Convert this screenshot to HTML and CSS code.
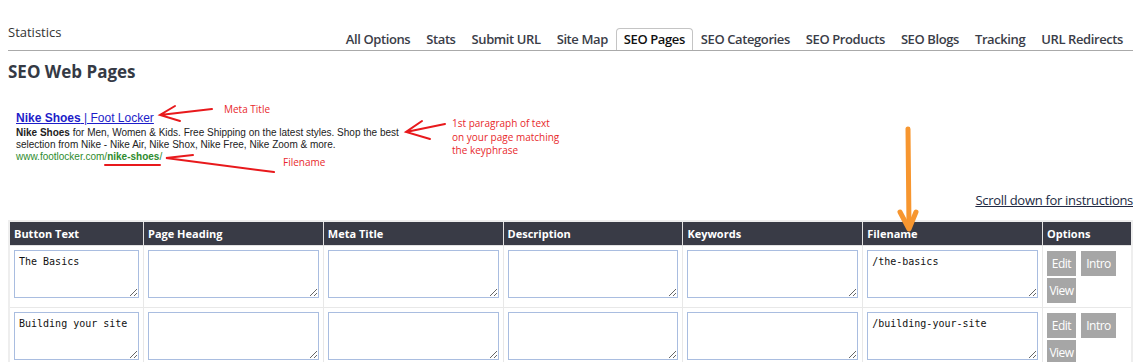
FILE: index.html
```html
<!DOCTYPE html>
<html lang="en">
<head>
    <meta charset="UTF-8">
    <meta name="viewport" content="width=device-width, initial-scale=1.0">
    <title>SEO Web Pages</title>
    <link rel="stylesheet" href="styles.css">
</head>
<body>
    <div class="page">
        <div class="topbar">
            <div class="section-title">Statistics</div>
            <ul class="tabs">
                <li><a href="#">All Options</a></li>
                <li><a href="#">Stats</a></li>
                <li><a href="#">Submit URL</a></li>
                <li><a href="#">Site Map</a></li>
                <li class="active"><a href="#">SEO Pages</a></li>
                <li><a href="#">SEO Categories</a></li>
                <li><a href="#">SEO Products</a></li>
                <li><a href="#">SEO Blogs</a></li>
                <li><a href="#">Tracking</a></li>
                <li><a href="#">URL Redirects</a></li>
            </ul>
        </div>

        <h1>SEO Web Pages</h1>

        <div class="example">
            <div class="snippet">
                <a class="snippet-title" href="#"><b>Nike Shoes</b> | Foot Locker</a>
                <p class="snippet-text"><b>Nike Shoes</b> for Men, Women &amp; Kids. Free Shipping on the latest styles. Shop the best<br>selection from Nike - Nike Air, Nike Shox, Nike Free, Nike Zoom &amp; more.</p>
                <div class="snippet-url">www.footlocker.com/<b>nike-shoes</b>/</div>
            </div>
            <div class="note note-title">Meta Title</div>
            <div class="note note-text">1st paragraph of text<br>on your page matching<br>the keyphrase</div>
            <div class="note note-file">Filename</div>
        </div>

        <div class="scroll-row"><a href="#">Scroll down for instructions</a></div>

        <table class="pages">
            <thead>
                <tr>
                    <th class="col-button">Button Text</th>
                    <th>Page Heading</th>
                    <th>Meta Title</th>
                    <th>Description</th>
                    <th>Keywords</th>
                    <th>Filename</th>
                    <th class="col-options">Options</th>
                </tr>
            </thead>
            <tbody>
                <tr>
                    <td><textarea>The Basics</textarea></td>
                    <td><textarea></textarea></td>
                    <td><textarea></textarea></td>
                    <td><textarea></textarea></td>
                    <td><textarea></textarea></td>
                    <td><textarea>/the-basics</textarea></td>
                    <td>
                        <div class="options">
                            <button class="btn-edit">Edit</button>
                            <button class="btn-intro">Intro</button>
                            <button class="btn-view">View</button>
                        </div>
                    </td>
                </tr>
                <tr>
                    <td><textarea>Building your site</textarea></td>
                    <td><textarea></textarea></td>
                    <td><textarea></textarea></td>
                    <td><textarea></textarea></td>
                    <td><textarea></textarea></td>
                    <td><textarea>/building-your-site</textarea></td>
                    <td>
                        <div class="options">
                            <button class="btn-edit">Edit</button>
                            <button class="btn-intro">Intro</button>
                            <button class="btn-view">View</button>
                        </div>
                    </td>
                </tr>
            </tbody>
        </table>

        <!-- hand drawn arrows over the example -->
        <svg class="arrows" width="1147" height="362" viewBox="0 0 1147 362">
            <g stroke="#e8191c" stroke-width="2" fill="none" stroke-linecap="round">
                <path d="M212 109 L160 115 M175 106 L160 115 L180 121"/>
                <path d="M445 124 L406 132 M422 121 L406 132 L430 139"/>
                <path d="M274 172 L166 158 L193 155"/>
                <path d="M105 165 L160 165"/>
            </g>
            <g stroke="#f7962f" stroke-width="5" fill="none" stroke-linecap="round" stroke-linejoin="round">
                <path d="M908 129 L909 226"/>
                <path d="M900 212 L909 229 L916 212"/>
            </g>
        </svg>
    </div>
</body>
</html>
```

FILE: styles.css
```css
body {
    margin: 0;
    background: #ffffff;
    font-family: "Open Sans", Arial, sans-serif;
    color: #333;
}

.page {
    position: relative;
    padding: 8px 14px 0 8px;
}

.topbar {
    display: flex;
    justify-content: space-between;
    align-items: flex-end;
    height: 42px;
    border-bottom: 1px solid #aaaaaa;
}

.section-title {
    align-self: flex-start;
    margin-top: 14px;
    font-size: 13px;
    line-height: 20px;
    color: #333;
}

.tabs {
    display: flex;
    list-style: none;
    margin: 0 2px 0 0;
    padding: 0;
}

.tabs li {
    border: 1px solid transparent;
    border-bottom: 0;
    border-radius: 4px 4px 0 0;
    padding: 1px 7px 2px;
}

.tabs a {
    display: block;
    font-size: 13px;
    font-weight: 600;
    line-height: 18px;
    letter-spacing: -0.4px;
    color: #3a3d48;
    text-decoration: none;
}

.tabs li.active {
    border-color: #c4c4c4;
    background: #fff;
}

.tabs li.active a {
    color: #111;
}

h1 {
    margin: 10px 0 0;
    font-size: 17px;
    line-height: 22px;
    font-weight: 700;
    color: #353a45;
}

.example {
    position: relative;
    height: 108px;
}

.snippet {
    padding: 28px 0 0 8px;
    font-family: Arial, "Liberation Sans", sans-serif;
}

.snippet-title {
    display: block;
    margin-bottom: 1px;
    font-size: 12px;
    line-height: 15px;
    color: #1d1dc9;
    text-decoration: underline;
}

.snippet-text {
    margin: 0;
    font-size: 10px;
    line-height: 12px;
    color: #222;
}

.snippet-url {
    font-size: 10px;
    line-height: 12px;
    color: #2e8b2e;
}

.note {
    position: absolute;
    font-size: 10px;
    line-height: 13px;
    color: #e8282b;
}

.note-title {
    left: 216px;
    top: 20px;
}

.note-text {
    left: 444px;
    top: 34px;
    line-height: 13.5px;
}

.note-file {
    left: 275px;
    top: 73px;
}

.scroll-row {
    text-align: right;
    font-size: 13px;
    line-height: 18px;
    letter-spacing: -0.3px;
}

.scroll-row a {
    color: #222a44;
    text-decoration: underline;
}

.pages {
    width: 100%;
    margin-top: 11px;
    table-layout: fixed;
    border-collapse: collapse;
    border: 2px solid #eeeeee;
}

.pages th {
    padding: 4px;
    background: #393b46;
    color: #fff;
    font-size: 11px;
    line-height: 15px;
    font-weight: 700;
    text-align: left;
    border: 1px solid #e2e2e2;
}

.pages .col-button {
    width: 125px;
}

.pages .col-options {
    width: 80px;
}

.pages td {
    padding: 4px;
    vertical-align: top;
    border: 1px solid #e8e8e8;
}

.pages textarea {
    display: block;
    box-sizing: border-box;
    width: 100%;
    height: 48px;
    margin: 0;
    padding: 4px;
    border: 1px solid #a9bde0;
    font-family: "DejaVu Sans Mono", "Liberation Mono", monospace;
    font-size: 10px;
    line-height: 13px;
    color: #111;
}

.options {
    display: flex;
    flex-wrap: wrap;
    gap: 2px 5px;
    padding-top: 1px;
}

.options button {
    height: 25px;
    padding: 0;
    border: none;
    background: #a6a6a6;
    color: #fff;
    font-family: "Open Sans", Arial, sans-serif;
    font-size: 12px;
    letter-spacing: -0.5px;
    cursor: pointer;
}

.btn-edit,
.btn-view {
    width: 29px;
}

.btn-intro {
    width: 35px;
}

.arrows {
    position: absolute;
    top: 0;
    left: 0;
    pointer-events: none;
}
```
